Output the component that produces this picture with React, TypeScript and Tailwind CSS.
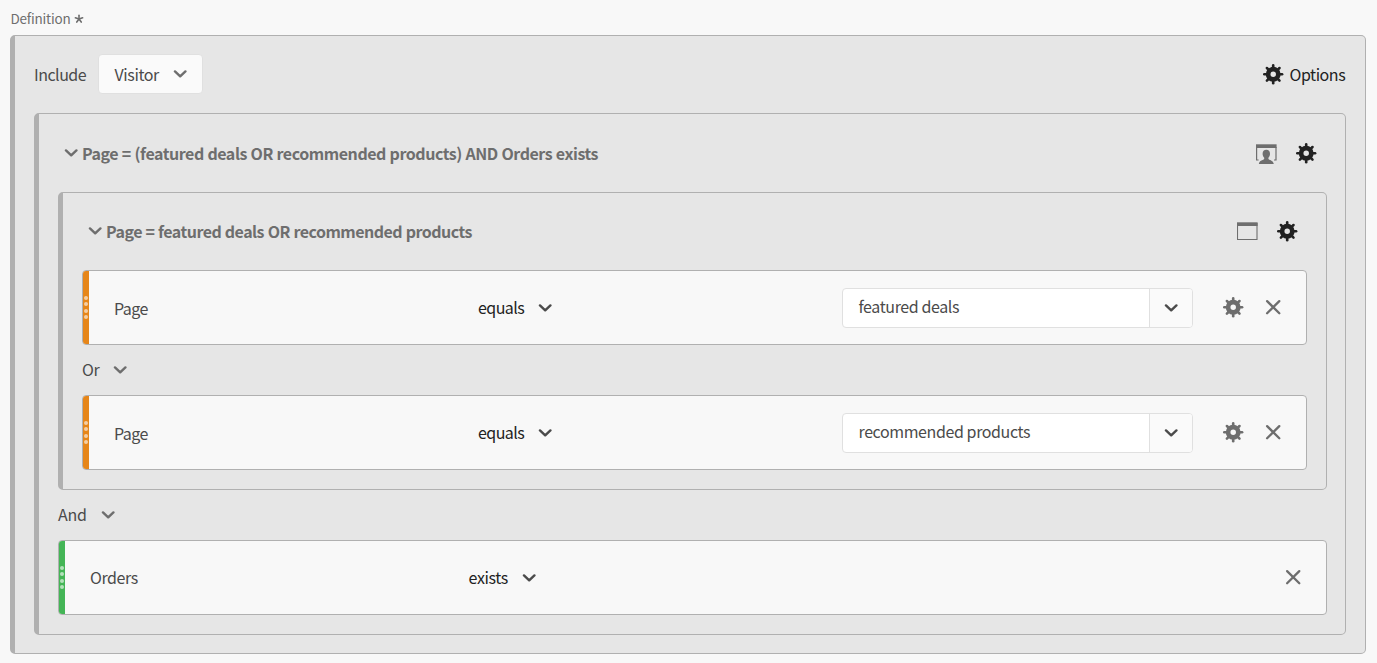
import React from 'react';

function Gear({ className = '' }: { className?: string }) {
  return (
    <svg width="21" height="21" viewBox="-10.2 -10.3 21 21" className={'-mr-px block shrink-0 ' + className}>
      <circle r="5.1" fill="none" stroke="currentColor" strokeWidth="4.7" />
      {[0, 45, 90, 135, 180, 225, 270, 315].map((a) => (
        <path key={a} d="M0 -6V-8.9" transform={`rotate(${a})`} stroke="currentColor" strokeWidth="2.6" strokeLinecap="round" />
      ))}
    </svg>
  );
}

function Chevron({ className = '' }: { className?: string }) {
  return (
    <svg width="14" height="8" viewBox="0 0 14 8" className={'block shrink-0 ' + className}>
      <path d="M2 1.4L7.2 6.3L12.4 1.4" fill="none" stroke="currentColor" strokeWidth="2.4" strokeLinecap="round" strokeLinejoin="round" />
    </svg>
  );
}

function Cross() {
  return (
    <svg width="16" height="16" viewBox="0 0 16 16" className="block shrink-0 text-[#6e6e6e]">
      <path d="M2.1 2.1L14.3 14.3M14.3 2.1L2.1 14.3" fill="none" stroke="currentColor" strokeWidth="2.3" strokeLinecap="round" />
    </svg>
  );
}

function WindowIcon() {
  return (
    <svg width="21" height="18" viewBox="0 0 21 18" className="block shrink-0">
      <path d="M.5 1V17.5H20V1" fill="none" stroke="#6e6e6e" strokeWidth="1.1" />
      <path d="M0 .3H20.6V4H0Z" fill="#6e6e6e" />
    </svg>
  );
}

function VisitorIcon() {
  return (
    <svg width="21" height="20" viewBox="0 0 21 20" className="block shrink-0">
      <path d="M0 .3H20.6V4H0Z" fill="#6e6e6e" />
      <path d="M.6 3V16H2.6M20 3V16H18" fill="none" stroke="#6e6e6e" strokeWidth="1.2" />
      <path
        d="M10.3 5.8C12.6 5.8 14 7.4 14 9.7C14 11.4 13.3 12.9 12.4 13.8V14.8C12.4 15.3 12.8 15.6 13.4 15.8C16 16.6 17.4 17.9 17.8 20H2.8C3.2 17.9 4.6 16.6 7.2 15.8C7.8 15.6 8.2 15.3 8.2 14.8V13.8C7.3 12.9 6.6 11.4 6.6 9.7C6.6 7.4 8 5.8 10.3 5.8Z"
        fill="#6e6e6e"
      />
    </svg>
  );
}

function Grip({ color }: { color: string }) {
  return (
    <div className={'flex w-[6px] shrink-0 flex-col items-center justify-center gap-[2.4px] rounded-l-[3px] ' + color}>
      {[0, 1, 2, 3].map((i) => (
        <i key={i} className="block size-[4px] rounded-full bg-white/60" />
      ))}
    </div>
  );
}

function PageRule({ value }: { value: string }) {
  return (
    <div className="flex h-[75px] rounded-[4px] border border-[#b0b0b0] bg-[#f8f8f8]">
      <Grip color="bg-[#e68619]" />
      <div className="w-[364px] pt-[25px] pl-[25px] tracking-[-0.55px]">Page</div>
      <div className="flex w-[389px] pt-[24px] pl-[25px] text-[#222]">
        <span className="w-[60px] tracking-[-0.55px]">equals</span>
        <Chevron className="mt-[9px] text-[#4b4b4b]" />
      </div>
      <div className="mt-[17px] flex h-10 w-[351px] rounded-[4px] border border-[#e0e0e0] bg-white">
        <span className="flex-1 pt-[5px] pl-[15.5px] tracking-[-0.4px]">{value}</span>
        <div className="flex w-[43px] items-center justify-center rounded-r-[3px] border-l border-[#e0e0e0] bg-[#fafafa]">
          <Chevron className="text-[#4b4b4b]" />
        </div>
      </div>
      <div className="mt-[26px] ml-[30px] flex h-5 items-start gap-[22px]">
        <Gear className="text-[#6e6e6e]" />
        <div className="pt-[2px]">
          <Cross />
        </div>
      </div>
    </div>
  );
}

export default function App() {
  return (
    <div className="h-[663px] w-[1377px] overflow-hidden bg-[#f8f8f8] pl-[10px] font-['Noto_Sans_CJK_SC',sans-serif] text-[16px] leading-6 whitespace-nowrap text-[#4b4b4b]">
      <div className="flex h-[35px] pt-[6px] text-[13.5px] text-[#6e6e6e]">
        <span className="w-[64px] pl-[0.5px] tracking-[-0.2px]">Definition</span>
        <svg width="10" height="10" viewBox="-5 -5 10 10" className="mt-[8px] block">
          {[0, 72, 144, 216, 288].map((a) => (
            <path key={a} d="M0 0V-3.8" transform={`rotate(${a})`} stroke="#6e6e6e" strokeWidth="1.6" strokeLinecap="round" />
          ))}
        </svg>
      </div>
      <div className="h-[619px] w-[1356px] rounded-[5px] border border-l-[5px] border-[#b0b0b0] bg-[#e6e6e6] px-[19px]">
        <div className="flex h-[77px]">
          <span className="w-[64px] pt-[26px] tracking-[-0.5px]">Include</span>
          <div className="mt-[18px] flex h-10 w-[105px] items-start rounded-[4px] border border-[#e0e0e0] bg-[#fafafa] pl-[15px]">
            <span className="w-[59px] pt-[7px] pl-[0.5px] tracking-[-0.4px]">Visitor</span>
            <Chevron className="mt-[15px] text-[#6e6e6e]" />
          </div>
          <div className="ml-auto flex w-[83px] text-[#222]">
            <Gear className="mt-[28px]" />
            <span className="pt-[26px] pl-[6.5px] tracking-[-0.45px]">Options</span>
          </div>
        </div>
        <div className="h-[522px] rounded-[5px] border border-l-[5px] border-[#b0b0b0] pr-[18px] pl-[19px]">
          <div className="flex h-[78px] pl-[6px] text-[#6e6e6e]">
            <Chevron className="mt-[35px]" />
            <span className="pt-[27px] pl-[4px] font-bold tracking-[-0.45px] [word-spacing:0.45px]">Page = (featured deals OR recommended products) AND Orders exists</span>
            <div className="mt-[29px] mr-[11px] ml-auto flex gap-[19px]">
              <div className="pt-px">
                <VisitorIcon />
              </div>
              <Gear className="text-[#222]" />
            </div>
          </div>
          <div className="h-[298px] rounded-[5px] border border-l-[5px] border-[#b0b0b0] px-[19px]">
            <div className="flex h-[77px] pl-[6px] text-[#6e6e6e]">
              <Chevron className="mt-[34px]" />
              <span className="pt-[26px] pl-[4px] font-bold tracking-[-0.52px] [word-spacing:0.5px]">Page = featured deals OR recommended products</span>
              <div className="mt-[28px] mr-[10px] ml-auto flex gap-[19px]">
                <div className="pt-px">
                  <WindowIcon />
                </div>
                <Gear className="text-[#222]" />
              </div>
            </div>
            <PageRule value="featured deals" />
            <div className="flex h-[50px] pt-[12px]">
              <span className="w-[31px] tracking-[-0.4px]">Or</span>
              <Chevron className="mt-[9px] text-[#6e6e6e]" />
            </div>
            <PageRule value="recommended products" />
          </div>
          <div className="flex h-[50px] pt-[12px]">
            <span className="w-[43px] tracking-[-0.3px]">And</span>
            <Chevron className="mt-[9px] text-[#6e6e6e]" />
          </div>
          <div className="flex h-[75px] rounded-[4px] border border-[#b0b0b0] bg-[#f8f8f8]">
            <Grip color="bg-[#44b556]" />
            <div className="w-[378px] pt-[24px] pl-[25px] tracking-[-0.4px]">Orders</div>
            <div className="flex pt-[24px] pl-[25.5px] text-[#222]">
              <span className="w-[53.5px] tracking-[-0.35px]">exists</span>
              <Chevron className="mt-[9px] text-[#4b4b4b]" />
            </div>
            <div className="mt-[28px] mr-[25px] ml-auto">
              <Cross />
            </div>
          </div>
        </div>
      </div>
    </div>
  );
}
